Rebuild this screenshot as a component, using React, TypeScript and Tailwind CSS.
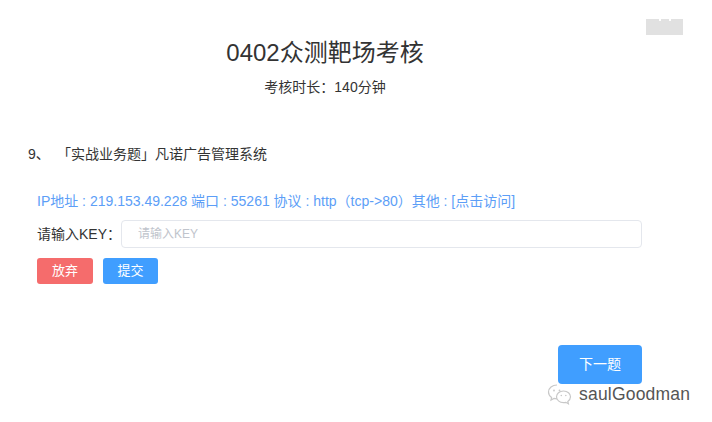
import React from "react";

const FONT = { fontFamily: '"Liberation Sans", "Noto Sans CJK SC", sans-serif' };

export default function App() {
  return (
    <div className="relative w-[712px] h-[422px] bg-white overflow-hidden" style={FONT}>
      {/* top-right grey tab */}
      <div className="absolute left-[646px] top-[19px] w-[37px] h-[16px] bg-[#e1e1e1]">
        <div className="absolute left-[13px] top-0 w-[2px] h-[2px] bg-white" />
        <div className="absolute left-[23px] top-0 w-[2px] h-[2px] bg-white" />
      </div>

      <div className="w-[650px] pt-[37px]">
        <h1 className="text-center text-[24px] leading-[32px] text-[#333] font-normal">
          0402众测靶场考核
        </h1>
        <p className="mt-[8px] text-center text-[14px] leading-[20px] text-[#333]">
          考核时长：140分钟
        </p>

        <div className="mt-[47px] flex text-[14px] leading-[20px] text-[#333]">
          <span className="ml-[28px] w-[29px]">9、</span>
          <span>「实战业务题」凡诺广告管理系统</span>
        </div>

        <div className="pl-[37px]">
          <p className="mt-[27px] text-[14px] leading-[20px] text-[#5c9ef7]">
            IP地址 : 219.153.49.228 端口 : 55261 协议 : http（tcp-&gt;80）其他 : [点击访问]
          </p>

          <div className="mt-[9px] flex items-center">
            <label className="w-[84px] text-[14px] leading-[20px] text-[#333]">请输入KEY：</label>
            <input
              placeholder="请输入KEY"
              className="w-[521px] h-[28px] rounded-[4px] border border-[#e4e7ed] pl-[16px] text-[12px] outline-none placeholder:text-[#c0c4cc]"
              style={FONT}
            />
          </div>

          <div className="mt-[10px] flex gap-[10px]">
            <button className="w-[56px] h-[26px] rounded-[3px] bg-[#f56c6c] text-white text-[13px]">放弃</button>
            <button className="w-[55px] h-[26px] rounded-[3px] bg-[#409eff] text-white text-[13px]">提交</button>
          </div>
        </div>

        <div className="mt-[61px] flex justify-end pr-[8px]">
          <button className="w-[84px] h-[39px] rounded-[4px] bg-[#409eff] text-white text-[14px]">下一题</button>
        </div>
      </div>

      {/* watermark */}
      <div className="absolute left-[547px] top-[382px] flex items-center gap-[6px]">
        <svg width="26" height="22" viewBox="0 0 26 22" fill="none" stroke="#c8c8c8" strokeWidth="1.2">
          <path d="M10 2C5.3 2 1.5 5.1 1.5 9c0 2.2 1.2 4.1 3.1 5.4L4 17l3-1.6c.9.3 1.9.4 3 .4" />
          <circle cx="7" cy="7.5" r="0.9" fill="#c8c8c8" stroke="none" />
          <circle cx="12.5" cy="7.5" r="0.9" fill="#c8c8c8" stroke="none" />
          <path d="M16.5 8C12.4 8 9.5 10.6 9.5 13.8s2.9 5.8 7 5.8c.8 0 1.6-.1 2.3-.3l2.6 1.4-.6-2.3c1.6-1.1 2.7-2.7 2.7-4.6C23.5 10.6 20.6 8 16.5 8z" />
          <circle cx="14.3" cy="12.5" r="0.8" fill="#c8c8c8" stroke="none" />
          <circle cx="18.8" cy="12.5" r="0.8" fill="#c8c8c8" stroke="none" />
        </svg>
        <span
          className="text-[17.5px] leading-[24px] text-[#555] tracking-[0.2px]"
          style={{ textShadow: "0 0 2px #fff, 0 0 2px #fff" }}
        >
          saulGoodman
        </span>
      </div>
    </div>
  );
}
